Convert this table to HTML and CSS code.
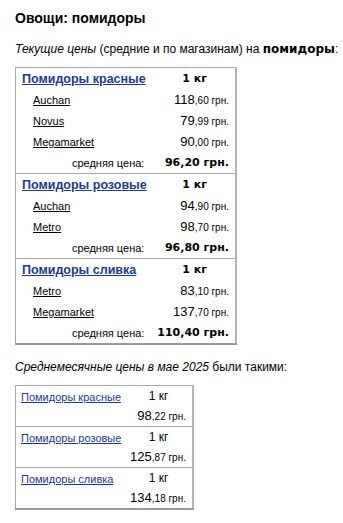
FILE: index.html
```html
<!DOCTYPE html>
<html lang="ru">
<head>
<meta charset="utf-8">
<link rel="stylesheet" href="styles.css">
</head>
<body>
<div class="page">
  <h1 class="title">Овощи: помидоры</h1>
  <p class="intro"><i>Текущие цены</i> (средние и по магазинам) на <b>помидоры</b>:</p>
  <table class="prices">
    <colgroup><col class="c1"><col class="c2"></colgroup>
    <tbody>
      <tr class="head"><td class="name"><a href="#">Помидоры красные</a></td><td class="unit">1 кг</td></tr>
      <tr><td class="shop"><a href="#">Auchan</a></td><td class="price"><span class="int">118</span><span class="dec">,60 грн.</span></td></tr>
      <tr><td class="shop"><a href="#">Novus</a></td><td class="price"><span class="int">79</span><span class="dec">,99 грн.</span></td></tr>
      <tr><td class="shop"><a href="#">Megamarket</a></td><td class="price"><span class="int">90</span><span class="dec">,00 грн.</span></td></tr>
      <tr><td class="avg-label">средняя цена:</td><td class="avg">96,20 грн.</td></tr>
      <tr class="head group"><td class="name"><a href="#">Помидоры розовые</a></td><td class="unit">1 кг</td></tr>
      <tr><td class="shop"><a href="#">Auchan</a></td><td class="price"><span class="int">94</span><span class="dec">,90 грн.</span></td></tr>
      <tr><td class="shop"><a href="#">Metro</a></td><td class="price"><span class="int">98</span><span class="dec">,70 грн.</span></td></tr>
      <tr><td class="avg-label">средняя цена:</td><td class="avg">96,80 грн.</td></tr>
      <tr class="head group"><td class="name"><a href="#">Помидоры сливка</a></td><td class="unit">1 кг</td></tr>
      <tr><td class="shop"><a href="#">Metro</a></td><td class="price"><span class="int">83</span><span class="dec">,10 грн.</span></td></tr>
      <tr><td class="shop"><a href="#">Megamarket</a></td><td class="price"><span class="int">137</span><span class="dec">,70 грн.</span></td></tr>
      <tr><td class="avg-label">средняя цена:</td><td class="avg">110,40 грн.</td></tr>
    </tbody>
  </table>
  <p class="intro month"><i>Среднемесячные цены в мае 2025</i> были такими:</p>
  <table class="monthly">
    <colgroup><col class="m1"><col class="m2"></colgroup>
    <tbody>
      <tr class="mhead"><td class="mname"><a href="#">Помидоры красные</a></td><td class="munit">1 кг</td></tr>
      <tr class="mprice"><td colspan="2" class="price"><span class="int">98</span><span class="dec">,22 грн.</span></td></tr>
      <tr class="mhead group"><td class="mname"><a href="#">Помидоры розовые</a></td><td class="munit">1 кг</td></tr>
      <tr class="mprice"><td colspan="2" class="price"><span class="int">125</span><span class="dec">,87 грн.</span></td></tr>
      <tr class="mhead group"><td class="mname"><a href="#">Помидоры сливка</a></td><td class="munit">1 кг</td></tr>
      <tr class="mprice"><td colspan="2" class="price"><span class="int">134</span><span class="dec">,18 грн.</span></td></tr>
    </tbody>
  </table>
</div>
</body>
</html>
```
FILE: styles.css
```css
html, body {
  margin: 0;
  padding: 0;
  background: #fff;
}
body {
  font-family: "Liberation Sans", Arial, sans-serif;
  color: #000;
}
.page {
  padding: 9px 0 0 15px;
}
.title {
  margin: 0;
  font-size: 14px;
  line-height: 18px;
  font-weight: bold;
}
.intro {
  margin: 14px 0 0;
  font-size: 12px;
  line-height: 16px;
  white-space: nowrap;
}
.intro b {
  font-family: "DejaVu Sans", Verdana, sans-serif;
}
.intro.month {
  margin-top: 14px;
}
table {
  border-collapse: collapse;
  border: 1px solid #a8a8a8;
  border-bottom: 2px solid #9a9a9a;
  border-right: 2px solid #b4b4b4;
}
td {
  padding: 0;
  white-space: nowrap;
  line-height: 14px;
}
.group td {
  border-top: 1px solid #a8a8a8;
}
.prices {
  margin-top: 10px;
  width: 222px;
}
.c1 { width: 140px; }
.c2 { width: 82px; }
.prices td {
  height: 21px;
}
.name {
  padding-left: 6px !important;
}
.name a {
  color: #1b3a93;
  font-size: 12.5px;
  font-weight: bold;
}
.unit {
  text-align: center;
  font-family: "DejaVu Sans", Verdana, sans-serif;
  font-weight: bold;
  font-size: 11px;
}
.shop {
  padding-left: 17px !important;
}
.shop a {
  color: #000;
  font-size: 11px;
}
.price {
  text-align: right;
  padding-right: 6px !important;
}
.int {
  font-size: 13px;
}
.dec {
  font-size: 10px;
}
.avg-label {
  text-align: right;
  font-size: 11px;
  padding-right: 10px !important;
}
.avg {
  text-align: right;
  padding-right: 6px !important;
  font-family: "DejaVu Sans", Verdana, sans-serif;
  font-weight: bold;
  font-size: 11px;
}
.monthly {
  margin-top: 10px;
  width: 179px;
}
.m1 { width: 110px; }
.m2 { width: 69px; }
.mhead td { height: 20px; }
.mprice td { height: 20px; }
.mname {
  padding-left: 5px !important;
}
.mname a {
  color: #1b3a93;
  font-size: 11px;
}
.munit {
  text-align: center;
  font-size: 12px;
}
```
